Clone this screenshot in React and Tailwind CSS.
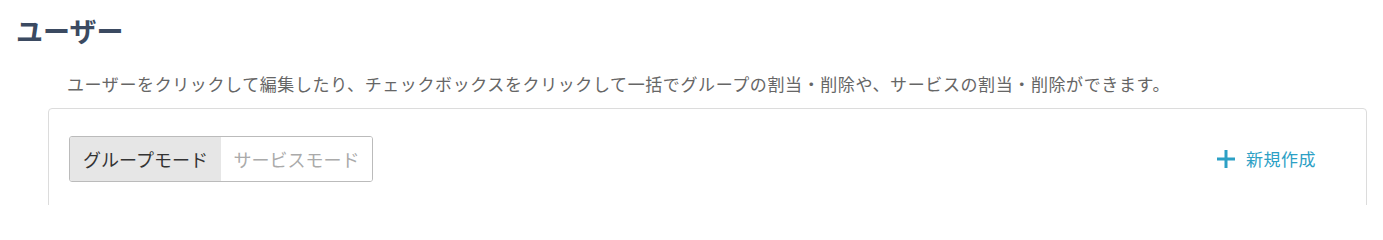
import React from 'react';

const jp = { fontFamily: '"Noto Sans CJK JP", "Noto Sans", sans-serif' };

function PlusIcon() {
  return (
    <svg width="18" height="18" viewBox="0 0 18 18" className="shrink-0">
      <path d="M9 0v18M0 9h18" stroke="#2ca0c5" strokeWidth="3" fill="none" />
    </svg>
  );
}

export default function App() {
  return (
    <div className="bg-white w-full h-[205px] overflow-hidden pl-4 pr-4" style={jp}>
      <div className="h-[60px] flex items-center">
        <h1 className="text-[27px] font-bold text-[#3b4a61] leading-none">ユーザー</h1>
      </div>
      <div className="h-[48px] flex items-center pl-[51px] pb-[2px]">
        <p className="text-[17px] tracking-[0.6px] text-[#666] leading-none">
          ユーザーをクリックして編集したり、チェックボックスをクリックして一括でグループの割当・削除や、サービスの割当・削除ができます。
        </p>
      </div>
      <div className="ml-8 border border-[#dcdcdc] rounded-[4px] h-[140px] px-5 pt-[27px]">
        <div className="flex items-center justify-between">
          <div className="flex border border-[#bbb] rounded-[3px] overflow-hidden">
            <button className="w-[151px] h-[44px] bg-[#e6e6e6] text-[#333] text-[18px]">グループモード</button>
            <button className="w-[151px] h-[44px] bg-white text-[#aaa] text-[18px]">サービスモード</button>
          </div>
          <button className="flex items-center gap-[11px] mr-[30px] text-[#2ca0c5] text-[17px] tracking-[0.5px]">
            <PlusIcon />
            <span>新規作成</span>
          </button>
        </div>
      </div>
    </div>
  );
}
